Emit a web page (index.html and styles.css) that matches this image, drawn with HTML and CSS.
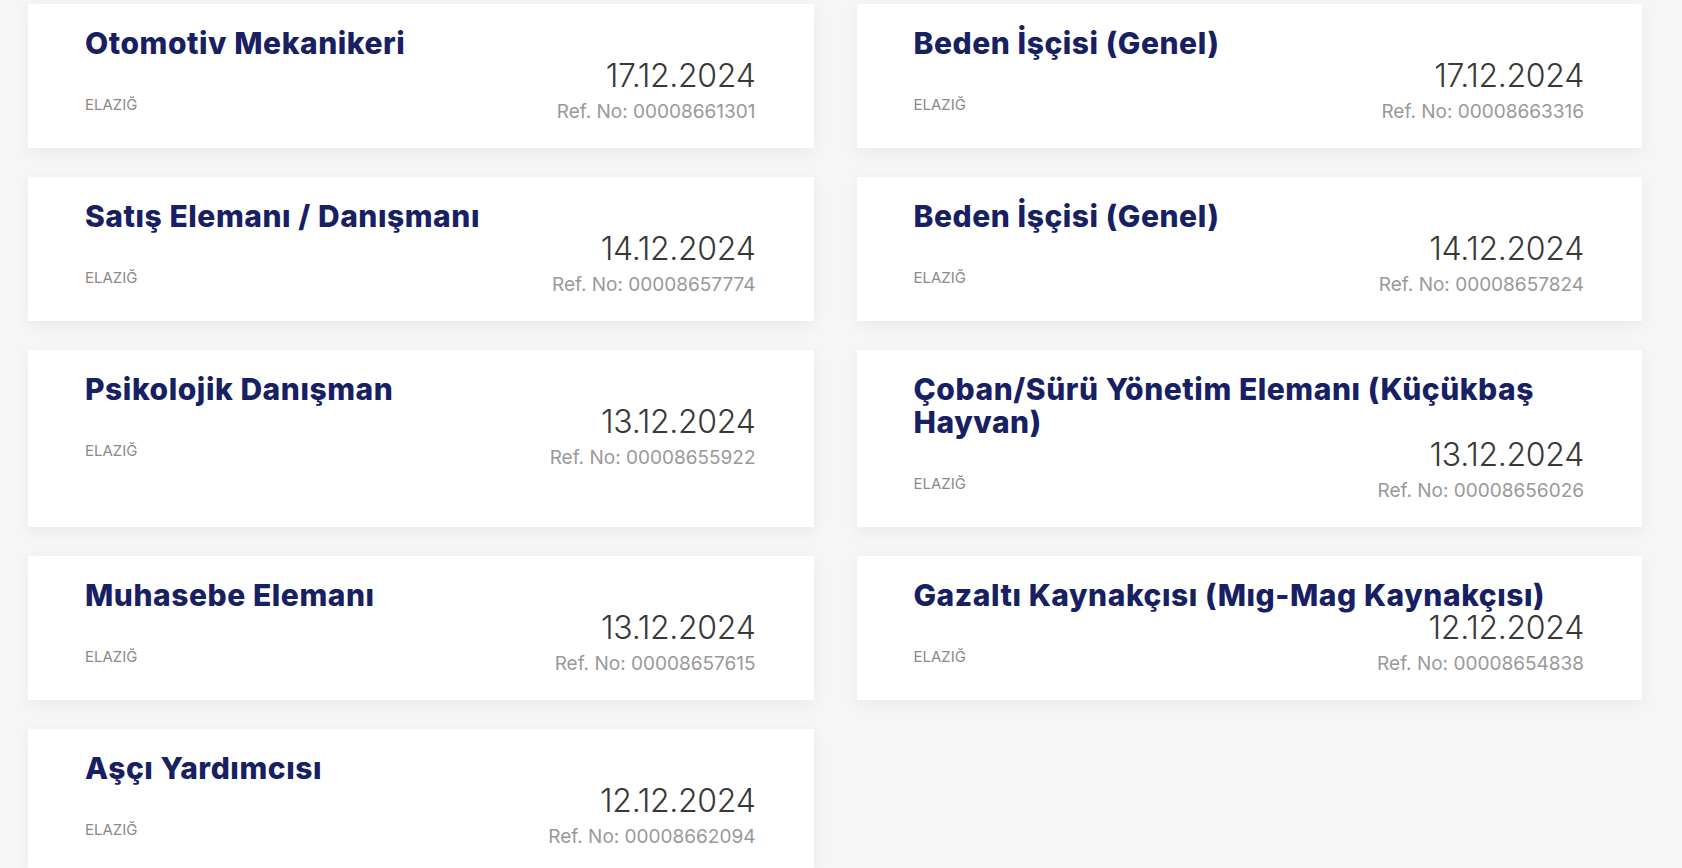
FILE: index.html
```html
<!DOCTYPE html>
<html lang="tr">
<head>
<meta charset="utf-8">
<title>İş İlanları</title>
<link rel="stylesheet" href="styles.css">
</head>
<body>
<main class="jobs">
  <article class="job">
    <h3 class="job-title">Otomotiv Mekanikeri</h3>
    <div class="job-meta">
      <span class="job-loc">ELAZIĞ</span>
      <div class="job-info">
        <div class="job-date">17.12.2024</div>
        <div class="job-ref">Ref. No: 00008661301</div>
      </div>
    </div>
  </article>
  <article class="job">
    <h3 class="job-title">Beden İşçisi (Genel)</h3>
    <div class="job-meta">
      <span class="job-loc">ELAZIĞ</span>
      <div class="job-info">
        <div class="job-date">17.12.2024</div>
        <div class="job-ref">Ref. No: 00008663316</div>
      </div>
    </div>
  </article>
  <article class="job">
    <h3 class="job-title">Satış Elemanı / Danışmanı</h3>
    <div class="job-meta">
      <span class="job-loc">ELAZIĞ</span>
      <div class="job-info">
        <div class="job-date">14.12.2024</div>
        <div class="job-ref">Ref. No: 00008657774</div>
      </div>
    </div>
  </article>
  <article class="job">
    <h3 class="job-title">Beden İşçisi (Genel)</h3>
    <div class="job-meta">
      <span class="job-loc">ELAZIĞ</span>
      <div class="job-info">
        <div class="job-date">14.12.2024</div>
        <div class="job-ref">Ref. No: 00008657824</div>
      </div>
    </div>
  </article>
  <article class="job">
    <h3 class="job-title">Psikolojik Danışman</h3>
    <div class="job-meta">
      <span class="job-loc">ELAZIĞ</span>
      <div class="job-info">
        <div class="job-date">13.12.2024</div>
        <div class="job-ref">Ref. No: 00008655922</div>
      </div>
    </div>
  </article>
  <article class="job">
    <h3 class="job-title">Çoban/Sürü Yönetim Elemanı (Küçükbaş Hayvan)</h3>
    <div class="job-meta">
      <span class="job-loc">ELAZIĞ</span>
      <div class="job-info">
        <div class="job-date">13.12.2024</div>
        <div class="job-ref">Ref. No: 00008656026</div>
      </div>
    </div>
  </article>
  <article class="job">
    <h3 class="job-title">Muhasebe Elemanı</h3>
    <div class="job-meta">
      <span class="job-loc">ELAZIĞ</span>
      <div class="job-info">
        <div class="job-date">13.12.2024</div>
        <div class="job-ref">Ref. No: 00008657615</div>
      </div>
    </div>
  </article>
  <article class="job">
    <h3 class="job-title">Gazaltı Kaynakçısı (Mıg-Mag Kaynakçısı)</h3>
    <div class="job-meta">
      <span class="job-loc">ELAZIĞ</span>
      <div class="job-info">
        <div class="job-date">12.12.2024</div>
        <div class="job-ref">Ref. No: 00008654838</div>
      </div>
    </div>
  </article>
  <article class="job">
    <h3 class="job-title">Aşçı Yardımcısı</h3>
    <div class="job-meta">
      <span class="job-loc">ELAZIĞ</span>
      <div class="job-info">
        <div class="job-date">12.12.2024</div>
        <div class="job-ref">Ref. No: 00008662094</div>
      </div>
    </div>
  </article>
</main>
</body>
</html>
```

FILE: styles.css
```css
html, body {
  margin: 0;
  padding: 0;
}

body {
  background: #f6f6f6;
  font-family: Inter, "Noto Sans", "Liberation Sans", sans-serif;
}

.jobs {
  display: grid;
  grid-template-columns: 1fr 1fr;
  column-gap: 43px;
  row-gap: 29px;
  padding: 4px 40px 40px 28px;
}

.job {
  background: #ffffff;
  box-shadow: 0 4px 14px rgba(0, 0, 0, 0.06);
  padding: 23px 58px 25px 57px;
  display: flex;
  flex-direction: column;
}

.job-title {
  margin: 0;
  font-size: 30px;
  line-height: 33px;
  font-weight: 800;
  color: #172063;
  letter-spacing: 0.55px;
}

.job-meta {
  display: flex;
  justify-content: space-between;
  align-items: flex-end;
}

.job-loc {
  font-size: 15px;
  line-height: 18px;
  color: #8a8a8a;
  margin-bottom: 9px;
}

.job-info {
  text-align: right;
}

.job-date {
  font-size: 32px;
  line-height: 32px;
  font-weight: 300;
  color: #383838;
  letter-spacing: -0.3px;
}

.job-ref {
  margin-top: 9px;
  font-size: 19px;
  line-height: 22px;
  font-weight: 400;
  color: #999999;
}
```
